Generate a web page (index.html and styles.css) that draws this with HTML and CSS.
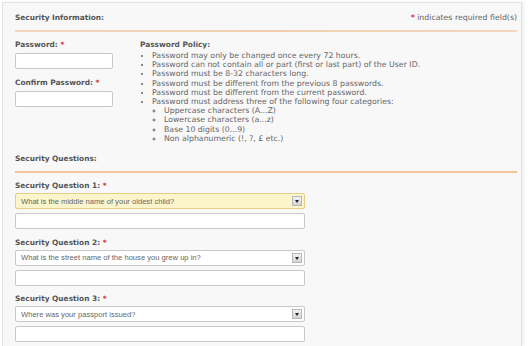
FILE: index.html
```html
<!DOCTYPE html>
<html>
<head>
<meta charset="utf-8">
<link rel="stylesheet" href="styles.css">
</head>
<body>
<div class="panel">
  <div class="sec-head">
    <span class="sec-title">Security Information:</span>
    <span class="req-note"><span class="star">*</span> indicates required field(s)</span>
  </div>
  <div class="rule"></div>
  <div class="pw-row">
    <div class="pw-col">
      <label class="lbl">Password: <span class="star">*</span></label>
      <div class="inp short"></div>
      <label class="lbl lbl-gap">Confirm Password: <span class="star">*</span></label>
      <div class="inp short"></div>
    </div>
    <div class="policy">
      <div class="policy-title">Password Policy:</div>
      <ul class="plist">
        <li>Password may only be changed once every 72 hours.</li>
        <li>Password can not contain all or part (first or last part) of the User ID.</li>
        <li>Password must be 8-32 characters long.</li>
        <li>Password must be different from the previous 8 passwords.</li>
        <li>Password must be different from the current password.</li>
        <li>Password must address three of the following four categories:
          <ul class="sublist">
            <li>Uppercase characters (A...Z)</li>
            <li>Lowercase characters (a...z)</li>
            <li>Base 10 digits (0...9)</li>
            <li>Non alphanumeric (!, ?, £ etc.)</li>
          </ul>
        </li>
      </ul>
    </div>
  </div>
  <div class="sec-head sq-head">
    <span class="sec-title">Security Questions:</span>
  </div>
  <div class="rule rule2"></div>
  <div class="q">
    <label class="lbl">Security Question 1: <span class="star">*</span></label>
    <div class="sel active"><span>What is the middle name of your oldest child?</span><span class="arrow"></span></div>
    <div class="inp wide"></div>
  </div>
  <div class="q">
    <label class="lbl">Security Question 2: <span class="star">*</span></label>
    <div class="sel"><span>What is the street name of the house you grew up in?</span><span class="arrow"></span></div>
    <div class="inp wide"></div>
  </div>
  <div class="q">
    <label class="lbl">Security Question 3: <span class="star">*</span></label>
    <div class="sel"><span>Where was your passport issued?</span><span class="arrow"></span></div>
    <div class="inp wide"></div>
  </div>
</div>
</body>
</html>
```
FILE: styles.css
```css
html, body {
  margin: 0;
  padding: 0;
  background: #ffffff;
  height: 346px;
  overflow: hidden;
}
.panel {
  box-sizing: border-box;
  margin: 2px 6px 0 2px;
  border: 1px solid #e2e2e2;
  border-bottom: none;
  background: #f8f8f8;
  padding: 10px 4px 0 12px;
  height: 344px;
  box-shadow: 2px 0 2px rgba(0,0,0,0.06);
  font-family: "DejaVu Sans", Verdana, sans-serif;
  color: #555;
}
.sec-head {
  display: flex;
  justify-content: space-between;
  align-items: center;
  height: 10px;
  line-height: 10px;
}
.sec-title {
  font-weight: bold;
  font-size: 7.4px;
  color: #555;
}
.req-note {
  font-size: 7.8px;
  color: #666;
}
.star {
  color: #d2343f;
  font-weight: bold;
}
.rule {
  height: 2px;
  margin-top: 7px;
  background: linear-gradient(to right, #f3d6bd, #f2cfb0 50%, #f3d6bd);
}
.rule2 {
  background: #f2c49c;
}
.pw-row {
  display: flex;
  margin-top: 8px;
}
.pw-col {
  width: 98px;
  display: flex;
  flex-direction: column;
  margin-right: 27px;
}
.lbl {
  display: block;
  font-weight: bold;
  font-size: 7.4px;
  line-height: 10px;
  height: 10px;
  color: #555;
}
.lbl-gap {
  margin-top: 9px;
}
.inp {
  box-sizing: border-box;
  background: #fff;
  border: 1px solid #c8c8c8;
  border-radius: 2px;
  margin-top: 3px;
  height: 16px;
}
.inp.short { width: 98px; }
.inp.wide { width: 290px; margin-top: 4px; height: 16px; }
.policy-title {
  font-weight: bold;
  font-size: 7.4px;
  line-height: 10px;
  color: #555;
}
.plist {
  margin: 1px 0 0 0;
  padding: 0 0 0 12px;
  font-size: 7.8px;
  line-height: 9.2px;
  color: #666;
  list-style: disc;
}
.sublist {
  margin: 0;
  padding: 0 0 0 12px;
  list-style: circle;
}
.sq-head {
  margin-top: 11px;
}
.q {
  margin-top: 8px;
}
.q + .q {
  margin-top: 8.5px;
}
.sel {
  box-sizing: border-box;
  width: 290px;
  height: 16px;
  margin-top: 2px;
  background: #fff;
  border: 1px solid #c8c8c8;
  border-radius: 2px;
  display: flex;
  align-items: center;
  justify-content: space-between;
  padding: 0 2px 0 5px;
  font-family: "Liberation Sans", Arial, sans-serif;
  font-size: 7.6px;
  color: #666;
}
.sel.active {
  background: #fcf5cc;
  border-color: #e3cf85;
}
.arrow {
  width: 10px;
  height: 10px;
  box-sizing: border-box;
  border: 1px solid #b8b8b8;
  background: linear-gradient(#f2f2f2, #d4d4d4);
  position: relative;
}
.arrow::after {
  content: "";
  position: absolute;
  left: 2px;
  top: 3px;
  border-left: 2px solid transparent;
  border-right: 2px solid transparent;
  border-top: 3px solid #222;
}
```
